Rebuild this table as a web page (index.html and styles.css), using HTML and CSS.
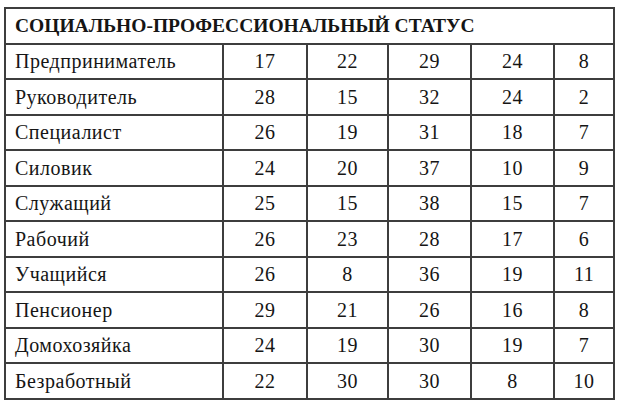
FILE: index.html
```html
<!DOCTYPE html>
<html>
<head>
<meta charset="utf-8">
<link rel="stylesheet" href="styles.css">
</head>
<body>
<table class="stat">
  <colgroup>
    <col class="c-name"><col class="c-n1"><col class="c-n2"><col class="c-n3"><col class="c-n4"><col class="c-n5">
  </colgroup>
  <thead>
    <tr><th colspan="6">СОЦИАЛЬНО-ПРОФЕССИОНАЛЬНЫЙ СТАТУС</th></tr>
  </thead>
  <tbody>
    <tr><td>Предприниматель</td><td>17</td><td>22</td><td>29</td><td>24</td><td>8</td></tr>
    <tr><td>Руководитель</td><td>28</td><td>15</td><td>32</td><td>24</td><td>2</td></tr>
    <tr><td>Специалист</td><td>26</td><td>19</td><td>31</td><td>18</td><td>7</td></tr>
    <tr><td>Силовик</td><td>24</td><td>20</td><td>37</td><td>10</td><td>9</td></tr>
    <tr><td>Служащий</td><td>25</td><td>15</td><td>38</td><td>15</td><td>7</td></tr>
    <tr><td>Рабочий</td><td>26</td><td>23</td><td>28</td><td>17</td><td>6</td></tr>
    <tr><td>Учащийся</td><td>26</td><td>8</td><td>36</td><td>19</td><td>11</td></tr>
    <tr><td>Пенсионер</td><td>29</td><td>21</td><td>26</td><td>16</td><td>8</td></tr>
    <tr><td>Домохозяйка</td><td>24</td><td>19</td><td>30</td><td>19</td><td>7</td></tr>
    <tr><td>Безработный</td><td>22</td><td>30</td><td>30</td><td>8</td><td>10</td></tr>
  </tbody>
</table>
</body>
</html>
```
FILE: styles.css
```css
html, body {
  margin: 0;
  padding: 0;
  background: #fff;
}
body {
  padding: 7px 0 0 4px;
  font-family: "Liberation Serif", serif;
  color: #151515;
}
.stat {
  border-collapse: collapse;
  table-layout: fixed;
  width: 609px;
}
.c-name { width: 218px; }
.c-n1 { width: 84px; }
.c-n2 { width: 81px; }
.c-n3 { width: 83px; }
.c-n4 { width: 83px; }
.c-n5 { width: 60px; }
.stat th, .stat td {
  font-family: "Liberation Serif", serif;
  border: 2px solid #3d3d3d;
  height: 33.5px;
  padding: 0;
  font-size: 20px;
  line-height: 20px;
  letter-spacing: 0.5px;
  text-align: center;
  vertical-align: middle;
}
.stat th {
  text-align: left;
  padding-left: 9px;
  font-weight: bold;
  font-size: 19.5px;
  letter-spacing: 0;
}
.stat td:first-child {
  text-align: left;
  padding-left: 9px;
}
```
